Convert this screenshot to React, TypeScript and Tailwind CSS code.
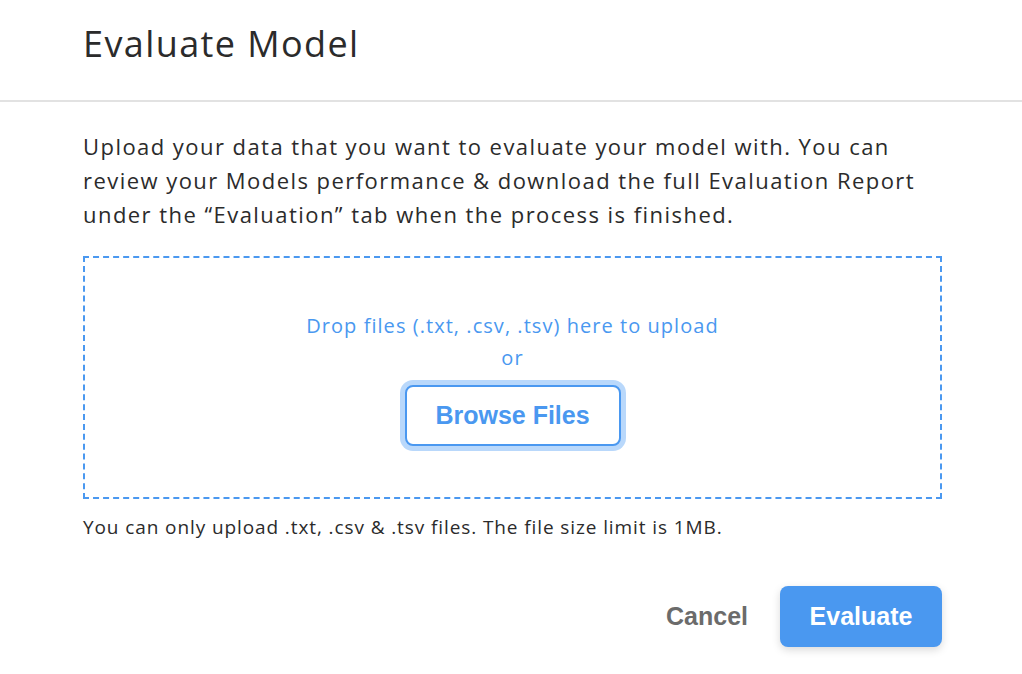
import React from "react";

const body = { fontFamily: '"Open Sans", "DejaVu Sans", sans-serif' };
const btn = { fontFamily: '"Liberation Sans", Arial, sans-serif' };

const EvaluateModel: React.FC = () => {
  return (
    <div className="w-[1022px] h-[674px] bg-white text-[#2b2b2b] overflow-hidden" style={body}>
      {/* Header */}
      <div className="h-[102px] border-b-2 border-[#e2e2e2] pl-[83px] pt-[20px]">
        <h1 className="text-[36px] leading-[48px] font-normal tracking-[1.4px]">Evaluate Model</h1>
      </div>

      {/* Body */}
      <div className="pl-[83px] pr-[80px] pt-[27px]">
        <p className="text-[22px] leading-[34px] tracking-[1.45px] pr-[14px]">
          Upload your data that you want to evaluate your model with. You can review your Models
          performance &amp; download the full Evaluation Report under the “Evaluation” tab when the
          process is finished.
        </p>

        {/* Drop zone */}
        <div className="mt-[25px] h-[243px] border-2 border-dashed border-[#4a98f0] flex flex-col items-center pt-[52px]">
          <p className="text-[20px] leading-[32px] tracking-[1.05px] text-[#4a98f0]">
            Drop files (.txt, .csv, .tsv) here to upload
          </p>
          <p className="text-[20px] leading-[32px] tracking-[1.05px] text-[#4a98f0]">or</p>
          <button
            className="mt-[11px] w-[216px] h-[61px] rounded-[8px] border-2 border-[#4a98f0] ring-[5px] ring-[#b9d8fb] bg-white text-[#4a98f0] text-[25px] font-bold"
            style={btn}
          >
            Browse Files
          </button>
        </div>

        <p className="mt-[15px] text-[19px] leading-[26px] tracking-[0.9px]">
          You can only upload .txt, .csv &amp; .tsv files. The file size limit is 1MB.
        </p>

        {/* Footer */}
        <div className="mt-[46px] flex justify-end items-center gap-[32px]">
          <button className="text-[25px] font-bold text-[#6b6b6b]" style={btn}>
            Cancel
          </button>
          <button
            className="w-[162px] h-[61px] rounded-[8px] bg-[#4a98f0] text-white text-[25px] font-bold shadow-[0_3px_8px_rgba(0,0,0,0.15)]"
            style={btn}
          >
            Evaluate
          </button>
        </div>
      </div>
    </div>
  );
};

export default EvaluateModel;
